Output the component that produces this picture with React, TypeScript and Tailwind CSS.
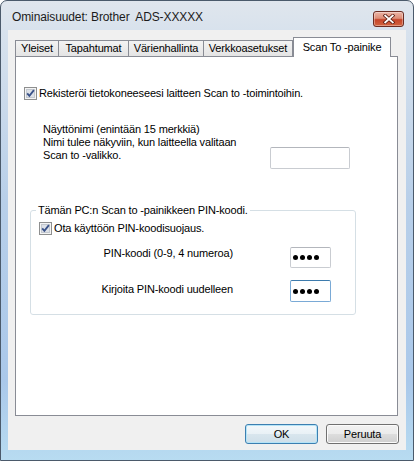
import React from "react";

const CheckBox = () => (
  <svg width="13" height="13" viewBox="0 0 13 13" className="shrink-0 block">
    <rect x="0.5" y="0.5" width="12" height="12" fill="#f4f4f4" stroke="#8e8f8f" />
    <rect x="2" y="2" width="9" height="9" fill="#dde1e7" />
    <rect x="2.5" y="2.5" width="8" height="8" fill="none" stroke="#c3c8cf" />
    <path d="M3.2 6.3 L5.4 8.9 L9.9 3.1" fill="none" stroke="#3a5289" strokeWidth="1.8" />
  </svg>
);

const Tab = ({ label, w, first }: { label: string; w: string; first?: boolean }) => (
  <div
    className={`${w} ${first ? "" : "-ml-px"} h-[16px] border border-b-0 border-[#898c95] bg-[linear-gradient(to_bottom,#f3f3f3,#e4e4e4)] flex items-center justify-center text-[11px] leading-[13px] tracking-[-0.15px] text-black whitespace-nowrap`}
  >
    {label}
  </div>
);

const Dots = () => (
  <div className="flex gap-[2px] pl-[2px]">
    <span className="w-[5px] h-[5px] rounded-full bg-black" />
    <span className="w-[5px] h-[5px] rounded-full bg-black" />
    <span className="w-[5px] h-[5px] rounded-full bg-black" />
    <span className="w-[5px] h-[5px] rounded-full bg-black" />
  </div>
);

export default function App() {
  return (
    <div className="w-[414px] h-[461px] rounded-t-[7px] border border-[#4b5a6b] bg-[linear-gradient(to_bottom,#e0e6ed_0px,#d8e2ed_30px,#b8cfe9_200px,#aac8ea_380px,#b8dcf1_461px)] flex flex-col font-['Liberation_Sans',Arial,sans-serif] text-black overflow-hidden">
      {/* title bar */}
      <div className="h-[29px] flex items-start pl-[11px] shrink-0">
        <div className="mt-[9px] text-[12px] leading-[15px] tracking-[-0.12px] text-[#1b1b1b] whitespace-pre">
          {"Ominaisuudet: Brother  ADS-XXXXX"}
        </div>
        <div className="ml-auto mr-[9px] mt-[10px] w-[31px] h-[16px] rounded-[3px] border border-[#6b2c22] bg-[linear-gradient(to_bottom,#ebb5a7_0%,#dd8d77_45%,#c6452a_55%,#d2643f_100%)] shadow-[inset_0_0_0_1px_rgba(255,255,255,0.35)] flex items-center justify-center">
          <svg width="12" height="10" viewBox="0 0 12 10">
            <path d="M2.2 1.6 L9.8 8.4 M9.8 1.6 L2.2 8.4" stroke="#5a1d12" strokeWidth="3.4" strokeLinecap="square" />
            <path d="M2.2 1.6 L9.8 8.4 M9.8 1.6 L2.2 8.4" stroke="#ffffff" strokeWidth="1.8" strokeLinecap="square" />
          </svg>
        </div>
      </div>

      {/* client area */}
      <div className="mx-[7px] mb-[10px] h-[420px] bg-[#f0f0f0] flex flex-col pl-[7px] pr-[8px] pt-[7px] pb-[6px]">
        {/* tabs */}
        <div className="h-[19px] flex items-end">
          <Tab label="Yleiset" w="w-[44px]" first />
          <Tab label="Tapahtumat" w="w-[71px]" />
          <Tab label="Värienhallinta" w="w-[76px]" />
          <Tab label="Verkkoasetukset" w="w-[90px]" />
          <div className="relative z-10 -mb-px w-[98px] h-[20px] border border-b-0 border-[#898c95] bg-white flex items-start justify-center pt-[3px] text-[11px] leading-[13px] tracking-[-0.15px] whitespace-nowrap">
            Scan To -painike
          </div>
        </div>

        {/* panel */}
        <div className="h-[360px] border border-[#898c95] bg-white flex flex-col text-[11px] leading-[13px] tracking-[-0.15px]">
          <div className="mt-[30px] ml-[8px] flex items-center gap-[2px] h-[13px]">
            <CheckBox />
            <span className="whitespace-nowrap">Rekisteröi tietokoneeseesi laitteen Scan to -toimintoihin.</span>
          </div>

          <div className="mt-[23px] ml-[27px] flex">
            <div className="w-[227px] whitespace-nowrap">
              <div>Näyttönimi (enintään 15 merkkiä)</div>
              <div>Nimi tulee näkyviin, kun laitteella valitaan</div>
              <div>Scan to -valikko.</div>
            </div>
            <div className="mt-[24px] w-[80px] h-[22px] rounded-[2px] border border-[#c9ccd1] border-t-[#b3b6bc] bg-white" />
          </div>

          <fieldset className="mt-[35px] ml-[14px] w-[326px] border border-[#d5dfe5] rounded-[3px] pb-[12px]">
            <legend className="ml-[5px] px-[2px] leading-[13px] whitespace-nowrap">
              Tämän PC:n Scan to -painikkeen PIN-koodi.
            </legend>
            <div className="mt-[5px] ml-[8px] flex items-center gap-[2px] h-[13px]">
              <CheckBox />
              <span className="whitespace-nowrap">Ota käyttöön PIN-koodisuojaus.</span>
            </div>
            <div className="mt-[12px] flex items-start">
              <div className="w-[202px] text-right whitespace-nowrap">PIN-koodi (0-9, 4 numeroa)</div>
              <div className="ml-[57px] w-[41px] h-[21px] rounded-[2px] border border-[#c9ccd1] border-t-[#b3b6bc] bg-white flex items-center">
                <Dots />
              </div>
            </div>
            <div className="mt-[12px] flex items-start">
              <div className="mt-[3px] w-[202px] text-right whitespace-nowrap">Kirjoita PIN-koodi uudelleen</div>
              <div className="ml-[57px] w-[41px] h-[22px] rounded-[2px] border border-[#7aaad6] border-t-[#3d7bad] bg-white flex items-center">
                <Dots />
              </div>
            </div>
          </fieldset>
        </div>

        {/* buttons */}
        <div className="mt-[8px] flex justify-end gap-[8px] pr-[-1px] text-[11px] leading-[13px] tracking-[-0.15px]">
          <div className="w-[73px] h-[20px] rounded-[3px] border border-[#3c7fb1] bg-[linear-gradient(to_bottom,#f3f8fb_0%,#e9f1f6_50%,#d9e6ee_50%,#cfdfe9_100%)] shadow-[inset_0_0_0_1px_#b5e4f7] flex items-center justify-center">
            OK
          </div>
          <div className="w-[73px] h-[20px] rounded-[3px] border border-[#707070] bg-[linear-gradient(to_bottom,#f2f2f2_0%,#ebebeb_50%,#dddddd_50%,#cfcfcf_100%)] shadow-[inset_0_0_0_1px_#fbfbfb] flex items-center justify-center -mr-px">
            Peruuta
          </div>
        </div>
      </div>
    </div>
  );
}
